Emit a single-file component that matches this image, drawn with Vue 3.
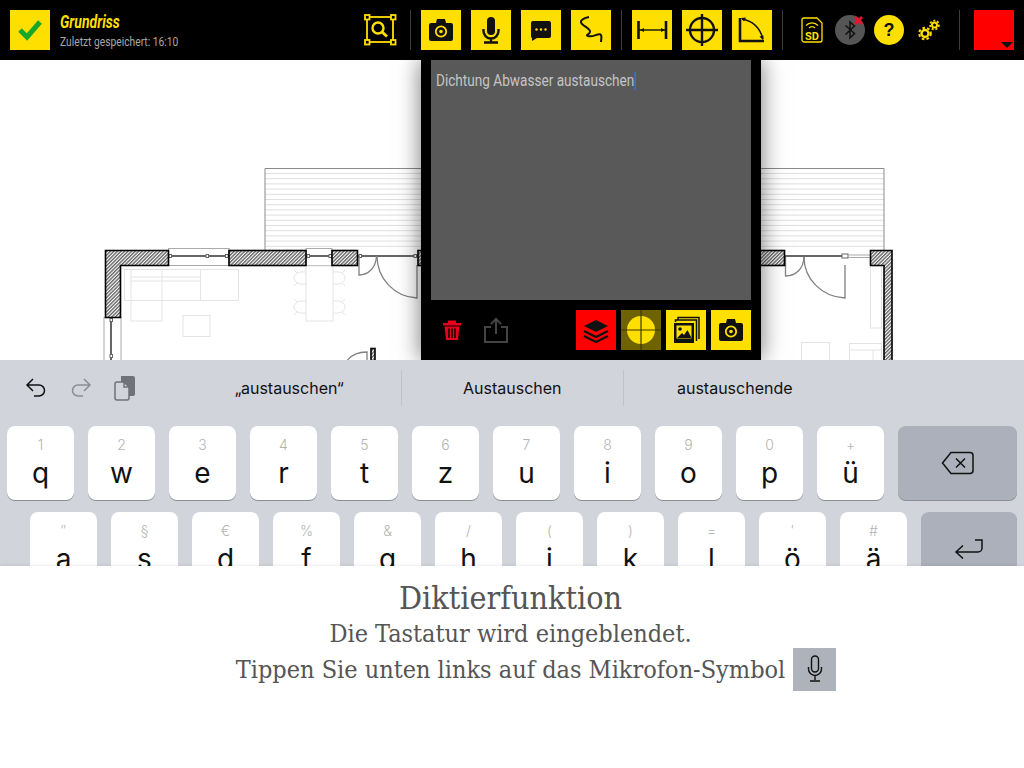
<script setup>
const terraceLines = Array.from({ length: 15 }, (_, i) => 173.5 + i * 5.2);

const rowOne = [
  ["1", "q"], ["2", "w"], ["3", "e"], ["4", "r"], ["5", "t"], ["6", "z"],
  ["7", "u"], ["8", "i"], ["9", "o"], ["0", "p"], ["+", "ü"],
];
const rowTwo = [
  ["\u2033", "a"], ["§", "s"], ["€", "d"], ["%", "f"], ["&", "g"], ["/", "h"],
  ["(", "j"], [")", "k"], ["=", "l"], ["\u2032", "ö"], ["#", "ä"],
];
const suggestions = ["„austauschen“", "Austauschen", "austauschende"];
</script>

<template>
  <div class="screen">
    <header class="topbar">
      <button class="tool check">
        <svg viewBox="0 0 40 40"><path d="M10 20l7 7L30 12" fill="none" stroke="#17a82a" stroke-width="5" /></svg>
      </button>
      <div class="title">
        <div class="name">Grundriss</div>
        <div class="saved">Zuletzt gespeichert: 16:10</div>
      </div>

      <svg class="inspect" viewBox="0 0 40 40" fill="none" stroke="#ffdf00" stroke-width="1.8">
        <rect x="7" y="7" width="26" height="25" />
        <g fill="#000">
          <rect x="5" y="5" width="4.500" height="4.500" /><rect x="31" y="5" width="4.500" height="4.500" />
          <rect x="5" y="30" width="4.500" height="4.500" /><rect x="31" y="30" width="4.500" height="4.500" />
        </g>
        <circle cx="18" cy="18" r="5.500" stroke-width="2.400" />
        <path d="M22 22l5 4.500" stroke-width="3" />
      </svg>
      <i class="divider"></i>

      <div class="group">
        <button class="tool">
          <svg viewBox="0 0 40 40">
            <path d="M8 15a2 2 0 0 1 2-2h5l1-4h8l1 4h5a2 2 0 0 1 2 2v14a2 2 0 0 1-2 2H10a2 2 0 0 1-2-2z" fill="#111" />
            <circle cx="20" cy="21.500" r="5.200" fill="none" stroke="#ffdf00" stroke-width="1.800" />
            <circle cx="20" cy="21.500" r="1.800" fill="#ffdf00" />
          </svg>
        </button>
        <button class="tool">
          <svg viewBox="0 0 40 40" fill="none" stroke="#111">
            <rect x="16" y="7" width="8" height="18" rx="4" fill="#111" stroke="none" />
            <path d="M12.500 19v2a7.500 7.500 0 0 0 15 0v-2M20 29v3M13 32.500h14" stroke-width="2.400" />
          </svg>
        </button>
        <button class="tool">
          <svg viewBox="0 0 40 40">
            <path d="M12 11h16a2 2 0 0 1 2 2v13a2 2 0 0 1-2 2H16l-5 3v-3a2 2 0 0 1-1-2V13a2 2 0 0 1 2-2z" fill="#111" />
            <circle cx="15.500" cy="19.500" r="1.200" fill="#ffdf00" /><circle cx="20" cy="19.500" r="1.200" fill="#ffdf00" /><circle cx="24.500" cy="19.500" r="1.200" fill="#ffdf00" />
          </svg>
        </button>
        <button class="tool">
          <svg viewBox="0 0 40 40">
            <path d="M18 7C12 8 8 11 11 14c3 3 9 5 8 8-1 3-5 3-2 4 5 2 11-4 13-1 1 2 0 5 0 7" fill="none" stroke="#111" stroke-width="2" />
          </svg>
        </button>
      </div>
      <i class="divider"></i>

      <div class="group">
        <button class="tool">
          <svg viewBox="0 0 40 40" stroke="#111" fill="none">
            <path d="M6.500 11v18M34 11v18" stroke-width="2.600" />
            <path d="M7 20h26" stroke-width="1.400" />
            <path d="M8 20l4-2v4zM33 20l-4-2v4z" fill="#111" stroke="none" />
          </svg>
        </button>
        <button class="tool">
          <svg viewBox="0 0 40 40" stroke="#111" fill="none" stroke-width="2.400">
            <circle cx="20" cy="20" r="12" /><path d="M20 4v32M4 20h32" />
          </svg>
        </button>
        <button class="tool">
          <svg viewBox="0 0 40 40" fill="none" stroke="#111">
            <path d="M8 8v23h24" stroke-width="2.600" />
            <path d="M10 9c11 2 18 9 21 20" stroke-width="1.500" />
            <path d="M9 8l5-.5-2 4zM31 30l-3.500-3.500 4-1z" fill="#111" stroke="none" />
          </svg>
        </button>
      </div>
      <i class="divider"></i>

      <div class="status">
        <svg class="sd" viewBox="0 0 22 26" fill="none" stroke="#ffdf00">
          <path d="M1 3a2 2 0 0 1 2-2h13l5 5v17a2 2 0 0 1-2 2H3a2 2 0 0 1-2-2z" stroke-width="1.300" />
          <path d="M5 8.500a8 8 0 0 1 12 0M8 11a4 4 0 0 1 6 0" stroke-width="1.200" />
          <text x="11" y="22.500" text-anchor="middle" class="sd-text" fill="#ffdf00" stroke="none">SD</text>
        </svg>
        <svg class="bt" viewBox="0 0 36 30">
          <circle cx="15" cy="15" r="15" fill="#555" />
          <path d="M10.500 10.500l9 8-4.500 4.500V7l4.500 4-9 8.500" fill="none" stroke="#111" stroke-width="1.500" />
          <path d="M20 2l7 7M27 2l-7 7" stroke="#f0102d" stroke-width="2.600" />
        </svg>
        <div class="help">?</div>
        <svg class="gears" viewBox="0 0 22 22" fill="none" stroke="#ffdf00">
          <circle cx="7" cy="14.500" r="3.500" stroke-width="2.400" />
          <circle cx="7" cy="14.500" r="5.800" stroke-width="2" stroke-dasharray="2.600 2.200" />
          <circle cx="16.500" cy="6" r="2.500" stroke-width="2" />
          <circle cx="16.500" cy="6" r="4.400" stroke-width="1.800" stroke-dasharray="2 1.800" />
        </svg>
      </div>
      <i class="divider last"></i>

      <div class="colour"><span class="caret"></span></div>
    </header>

    <main class="canvas">
      <svg class="plan" viewBox="0 60 1024 300">
        <defs>
          <pattern id="hatch" width="2.500" height="2.500" patternUnits="userSpaceOnUse" patternTransform="rotate(-45)">
            <rect width="2.500" height="2.500" fill="#fff" />
            <rect width="2.500" height="1.400" fill="#666" />
          </pattern>
        </defs>

        <!-- terrasse -->
        <g stroke="#dfdfdf">
          <line v-for="y in terraceLines" :key="y" x1="265" x2="884" :y1="y" :y2="y" />
        </g>
        <path d="M265 250V168.500H884V250" fill="none" stroke="#8a8a8a" />

        <!-- fenster und tueren -->
        <g fill="#fff" stroke="#aaa">
          <rect x="168.500" y="248.500" width="60.500" height="17" />
          <rect x="306" y="248.500" width="26" height="17" />
          <rect x="104" y="317.500" width="17" height="50" />
        </g>
        <g stroke="#666" stroke-width="2">
          <path d="M169 256h60M306 256h26M358 256h60M785 256h57M111 318v45" />
        </g>
        <g fill="#fff" stroke="#666">
          <rect x="169" y="254.500" width="2.500" height="3" /><rect x="206" y="254.500" width="2.500" height="3" />
          <rect x="225.500" y="254.500" width="2.500" height="3" /><rect x="307" y="254.500" width="2.500" height="3" />
          <rect x="329" y="254.500" width="2.500" height="3" /><rect x="359" y="254.500" width="2.500" height="3" />
          <rect x="414" y="254.500" width="2.500" height="3" /><rect x="110" y="318.500" width="2.500" height="3" />
          <rect x="110" y="354.500" width="2.500" height="3" /><rect x="842" y="254" width="6" height="4" />
        </g>
        <path d="M848 255h22M848 257.500h22" stroke="#aaa" fill="none" />
        <g fill="none" stroke="#808080" stroke-width="1.300">
          <path d="M359 256v19c9 0 17-7 17.500-19" />
          <path d="M377 256c0 22 17 41 40 42v-33" />
          <path d="M785.500 257v19c10 0 18-7 18.500-19" />
          <path d="M804 257c0 22 18 40 41 41v-33" />
          <path d="M346 362c4-6 12-10 21-10v9" />
        </g>

        <!-- moebel -->
        <g fill="none" stroke="#e4e4e4">
          <rect x="124.500" y="269.500" width="114" height="31" />
          <rect x="131" y="269.500" width="31" height="51.500" />
          <path d="M200.500 269.500v31M131 277h69.500M131 281h69.500" />
          <rect x="183" y="315.500" width="27" height="21" />
          <rect x="306" y="266" width="27" height="55" />
          <path d="M306 272c-7-1-12 2-12 6s5 7 12 6M294 270l3 3M294 286l3-3M306 301c-7-1-12 2-12 6s5 7 12 6M294 299l3 3M294 315l3-3" />
          <path d="M333 272c7-1 12 2 12 6s-5 7-12 6M345 270l-3 3M345 286l-3-3M333 301c7-1 12 2 12 6s-5 7-12 6M345 299l-3 3M345 315l-3-3" />
          <rect x="870.500" y="266" width="11" height="62" />
          <rect x="801.500" y="342.500" width="28" height="30" />
          <rect x="849.500" y="343.500" width="32" height="30" />
          <path d="M850 350h31M873 350v15" />
        </g>

        <!-- waende -->
        <g fill="url(#hatch)" stroke="#000" stroke-width="1.600">
          <path d="M105.500 250.500H168.500V265.500H120.500V317.500H105.500z" />
          <rect x="229" y="250.500" width="77" height="15" />
          <rect x="332" y="250.500" width="25.500" height="15" />
          <rect x="418" y="250.500" width="6" height="15" />
          <rect x="758" y="250.500" width="26.500" height="15" />
          <path d="M870.500 250.500H892V362H884V265.500H870.500z" />
          <rect x="371" y="348.500" width="4" height="14" />
        </g>
      </svg>

      <section class="note">
        <div class="note-text"><span class="note-line">Dichtung Abwasser austauschen<span class="cursor"></span></span></div>
        <div class="note-bar">
          <svg class="trash" viewBox="0 0 20 22" fill="#e8001c">
            <path d="M1 4h18v2.500H1zM6 1.500h8V4H6z" />
            <path d="M2.500 7.500h15L16 21H4zM6.200 9.500v9.500h1.500V9.500zM9.300 9.500v9.500h1.500V9.500zM12.300 9.500v9.500h1.500V9.500z" fill-rule="evenodd" />
          </svg>
          <svg class="share" viewBox="0 0 24 26" fill="none" stroke="#444" stroke-width="2">
            <path d="M7 10H1v15h22V10h-6M12 17V2M7 7l5-5 5 5" />
          </svg>
          <div class="note-tools">
            <button class="tool red">
              <svg viewBox="0 0 40 40">
                <path d="M20 10l12 6-12 6-12-6z" fill="#111" />
                <path d="M8 21l12 6 12-6M8 26l12 6 12-6" fill="none" stroke="#111" stroke-width="2.200" />
              </svg>
            </button>
            <button class="tool dim">
              <svg viewBox="0 0 40 40">
                <circle cx="20" cy="20" r="14" fill="#ffdf00" />
                <path d="M20 0v40M0 20h40" stroke="#3f3800" stroke-width="1.200" />
              </svg>
            </button>
            <button class="tool">
              <svg viewBox="0 0 40 40" fill="none" stroke="#111">
                <path d="M12 10V7.500h21V29" stroke-width="1.500" />
                <path d="M9.500 12V10h21v21" stroke-width="1.500" />
                <rect x="8" y="13" width="20" height="20" fill="#111" stroke="none" />
                <rect x="10.500" y="15.500" width="15" height="13" fill="#ffdf00" stroke="none" />
                <circle cx="14" cy="19" r="1.800" fill="#111" stroke="none" />
                <path d="M11 28l5-5 2 2 3.500-5 4 8z" fill="#111" stroke="none" />
              </svg>
            </button>
            <button class="tool">
              <svg viewBox="0 0 40 40">
                <path d="M8 15a2 2 0 0 1 2-2h5l1-4h8l1 4h5a2 2 0 0 1 2 2v14a2 2 0 0 1-2 2H10a2 2 0 0 1-2-2z" fill="#111" />
                <circle cx="20" cy="21.500" r="5.200" fill="none" stroke="#ffdf00" stroke-width="1.800" />
                <circle cx="20" cy="21.500" r="1.800" fill="#ffdf00" />
              </svg>
            </button>
          </div>
        </div>
      </section>
    </main>

    <section class="keyboard">
      <div class="assist">
        <div class="assist-icons">
          <svg class="undo" viewBox="0 0 24 24" fill="none" stroke="#111" stroke-width="1.500">
            <path d="M9 3L3 9l6 6M3 9h12a5.500 5.500 0 0 1 0 11h-5" />
          </svg>
          <svg class="redo" viewBox="0 0 24 24" fill="none" stroke="#8b8e94" stroke-width="1.500">
            <path d="M15 3l6 6-6 6M21 9H9a5.500 5.500 0 0 0 0 11h5" />
          </svg>
          <svg class="clip" viewBox="0 0 22 26">
            <path d="M7 1h12a2 2 0 0 1 2 2v16a2 2 0 0 1-2 2H7z" fill="#6f7277" />
            <path d="M3 7h7l5 5v11a2 2 0 0 1-2 2H3a2 2 0 0 1-2-2V9a2 2 0 0 1 2-2z" fill="#d1d4db" stroke="#6f7277" stroke-width="1.500" />
            <path d="M10 7v5h5" fill="none" stroke="#6f7277" stroke-width="1.500" />
          </svg>
        </div>
        <div class="suggestions">
          <div v-for="word in suggestions" :key="word" class="suggestion">{{ word }}</div>
        </div>
      </div>

      <div class="row">
        <div v-for="k in rowOne" :key="k[1]" class="key">
          <span class="hint">{{ k[0] }}</span><span class="letter">{{ k[1] }}</span>
        </div>
        <div class="key special wide">
          <svg class="backspace" viewBox="0 0 34 24" fill="none" stroke="#111" stroke-width="1.500">
            <path d="M10 1.500h19a3 3 0 0 1 3 3v15a3 3 0 0 1-3 3H10L1.500 12z" />
            <path d="M15 7.500l9 9M24 7.500l-9 9" />
          </svg>
        </div>
      </div>
      <div class="row second">
        <div v-for="k in rowTwo" :key="k[1]" class="key">
          <span class="hint">{{ k[0] }}</span><span class="letter">{{ k[1] }}</span>
        </div>
        <div class="key special return">
          <svg class="enter" viewBox="0 0 30 20" fill="none" stroke="#111" stroke-width="1.500">
            <path d="M9 6.500L2 13l7 6.500M2 13h22a4 4 0 0 0 4-4V1h-7" />
          </svg>
        </div>
      </div>
    </section>

    <section class="caption">
      <h1>Diktierfunktion</h1>
      <p>Die Tastatur wird eingeblendet.</p>
      <p class="mic-line">
        Tippen Sie unten links auf das Mikrofon-Symbol
        <span class="mic-chip">
          <svg viewBox="0 0 20 30" fill="none" stroke="#111" stroke-width="1.400">
            <rect x="6.500" y="2" width="7" height="16" rx="3.500" />
            <path d="M3.500 13v2a6.500 6.500 0 0 0 13 0v-2M10 22v4M5 27h10" />
          </svg>
        </span>
      </p>
    </section>
  </div>
</template>

<style scoped>
.screen {
  width: 1024px;
  height: 768px;
  display: flex;
  flex-direction: column;
  overflow: hidden;
  background: #fff;
}
.topbar {
  height: 60px;
  flex: none;
  display: flex;
  align-items: center;
  padding: 0 10px;
  box-sizing: border-box;
  background: #000;
  position: relative;
  z-index: 2;
}
.tool {
  width: 40px;
  height: 40px;
  padding: 0;
  border: 0;
  flex: none;
  display: block;
  background: #ffdf00;
}
.tool svg {
  display: block;
  width: 40px;
  height: 40px;
}
.title {
  flex: 1;
  margin-left: 10px;
  font-family: Roboto, "Liberation Sans", sans-serif;
}
/* keine schmale schrift installiert, daher gestaucht */
.name {
  color: #ffdf00;
  font-size: 18px;
  line-height: 21px;
  font-weight: 700;
  font-style: italic;
  transform: scaleX(0.78);
  transform-origin: left;
}
.saved {
  color: #a8a8a8;
  font-size: 13.500px;
  line-height: 18px;
  transform: scaleX(0.76);
  transform-origin: left;
  white-space: nowrap;
}
.inspect {
  width: 40px;
  height: 40px;
  flex: none;
}
.divider {
  width: 1px;
  height: 40px;
  margin: 0 10px;
  flex: none;
  background: #3c3c3c;
}
.divider.last {
  margin: 0 14px 0 0;
}
.group {
  display: flex;
  gap: 10px;
}
.status {
  display: flex;
  align-items: center;
  width: 176px;
  margin-left: -10px;
  padding-left: 18px;
  box-sizing: border-box;
}
.sd {
  width: 22px;
  height: 26px;
}
.sd-text {
  font-family: Roboto, "Liberation Sans", sans-serif;
  font-size: 11px;
  font-weight: 700;
}
.bt {
  width: 36px;
  height: 30px;
  margin-left: 12px;
}
.help {
  width: 30px;
  height: 30px;
  margin-left: 3px;
  border-radius: 50%;
  background: #ffdf00;
  color: #111;
  font: 700 18px/30px "Liberation Sans", sans-serif;
  text-align: center;
}
.gears {
  width: 22px;
  height: 22px;
  margin-left: 14px;
}
.colour {
  width: 40px;
  height: 40px;
  flex: none;
  position: relative;
  background: #ff0000;
}
.caret {
  position: absolute;
  right: 1px;
  bottom: 2px;
  border-style: solid;
  border-width: 6px 6.500px 0;
  border-color: #111 transparent transparent;
}
.canvas {
  height: 300px;
  flex: none;
  position: relative;
  display: flex;
  justify-content: center;
  overflow: hidden;
}
.plan {
  position: absolute;
  left: 0;
  top: 0;
  width: 1024px;
  height: 300px;
}
.note {
  width: 340px;
  height: 300px;
  padding: 0 10px;
  box-sizing: border-box;
  margin-left: 158px;
  position: relative;
  background: #000;
  box-shadow: 0 0 22px rgba(0, 0, 0, 0.55);
}
.note-text {
  height: 240px;
  padding: 10px 5px;
  box-sizing: border-box;
  background: #595959;
  color: #c4c4c4;
  font: 17px/20px Roboto, "Liberation Sans", sans-serif;
}
.note-line {
  display: block;
  white-space: nowrap;
  transform: scaleX(0.8);
  transform-origin: left;
}
.cursor {
  display: inline-block;
  width: 2px;
  height: 18px;
  vertical-align: -4px;
  background: #3d6bdc;
}
.note-bar {
  height: 60px;
  display: flex;
  align-items: center;
}
.trash {
  width: 20px;
  height: 22px;
  margin-left: 11px;
}
.share {
  width: 24px;
  height: 26px;
  margin-left: 22px;
}
.note-tools {
  margin-left: auto;
  display: flex;
  gap: 5px;
}
.tool.red {
  background: #ff0000;
}
.tool.dim {
  background: #6f6200;
}
.keyboard {
  height: 206px;
  flex: none;
  overflow: hidden;
  background: #d1d4db;
  font-family: Inter, "Liberation Sans", sans-serif;
  position: relative;
  z-index: 1;
}
.assist {
  height: 56px;
  margin-bottom: 10px;
  display: flex;
  align-items: center;
}
.assist-icons {
  width: 178px;
  flex: none;
  display: flex;
  align-items: center;
  padding-left: 24px;
  box-sizing: border-box;
}
.undo,
.redo {
  width: 24px;
  height: 24px;
}
.redo {
  margin-left: 21px;
}
.clip {
  width: 22px;
  height: 26px;
  margin-left: 21px;
}
.suggestions {
  display: flex;
  height: 36px;
}
.suggestion {
  width: 222.500px;
  line-height: 36px;
  text-align: center;
  font-size: 16px;
  color: #111;
  box-sizing: border-box;
  border-left: 1px solid #bfc2c9;
}
.suggestion:first-child {
  border-left: 0;
}
.row {
  display: flex;
  gap: 14px;
  padding-left: 7px;
  margin-bottom: 12px;
}
.row.second {
  padding-left: 30px;
}
.key {
  width: 67px;
  height: 74px;
  flex: none;
  display: flex;
  flex-direction: column;
  align-items: center;
  border-radius: 8px;
  background: #fff;
  box-shadow: 0 1px 0 #8c8e93;
}
.hint {
  margin-top: 10px;
  font-size: 14px;
  line-height: 18px;
  color: #b4b4b4;
  font-weight: 300;
}
.letter {
  margin-top: 3px;
  font-size: 28px;
  line-height: 32px;
  color: #111;
  font-weight: 400;
}
.key.special {
  justify-content: center;
  background: #abb0ba;
}
.key.wide {
  width: 119px;
}
.key.return {
  width: 96px;
}
.backspace {
  width: 34px;
  height: 24px;
}
.enter {
  width: 30px;
  height: 20px;
}
.caption {
  flex: 1;
  padding: 14px 3px 0 0;
  position: relative;
  z-index: 2;
  background: #fff;
  text-align: center;
  color: #555;
  font-family: "DejaVu Serif Condensed", "Liberation Serif", serif;
  box-shadow: 0 -1px 3px rgba(0, 0, 0, 0.08);
}
h1 {
  margin: 0;
  font-size: 32px;
  line-height: 36px;
  font-weight: 400;
}
p {
  margin: 0;
  font-size: 25px;
  line-height: 36px;
}
.mic-line {
  display: flex;
  justify-content: center;
  align-items: center;
  height: 36px;
  gap: 8px;
}
/* der text bleibt zentriert, das symbol haengt rechts daneben */
.mic-chip {
  width: 43px;
  height: 43px;
  flex: none;
  margin-right: -51px;
  margin-bottom: 2px;
  display: flex;
  align-items: center;
  justify-content: center;
  background: #adb2bb;
}
.mic-chip svg {
  width: 20px;
  height: 30px;
}
</style>
